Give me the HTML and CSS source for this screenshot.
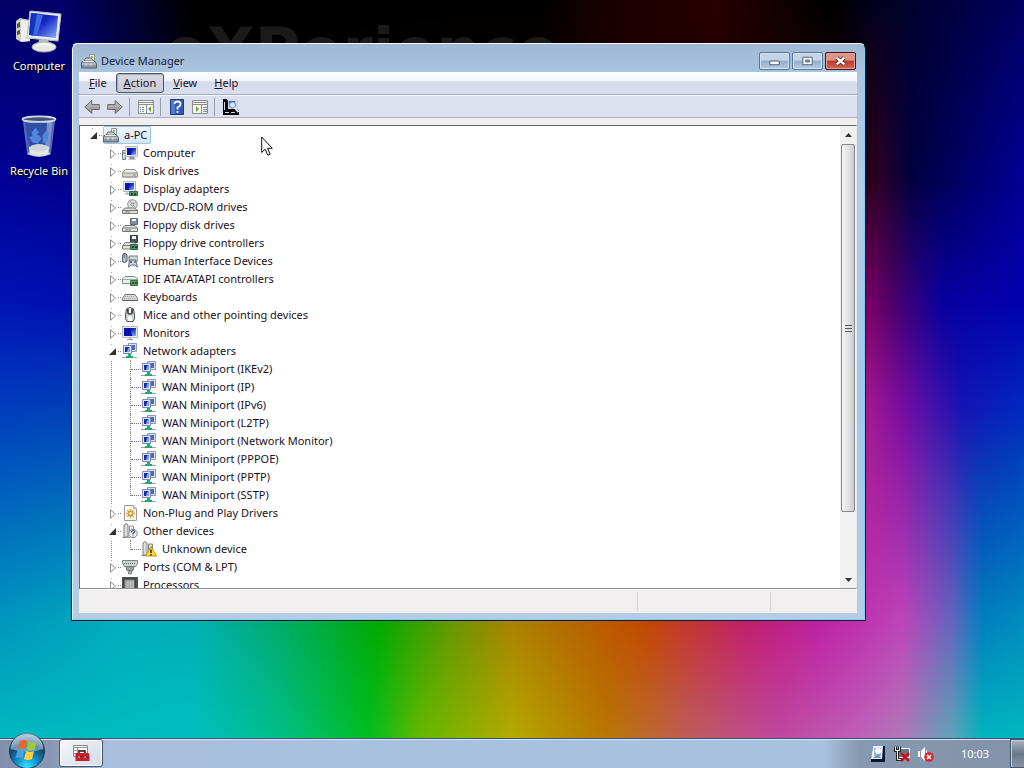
FILE: index.html
```html
<!DOCTYPE html>
<html lang="en">
<head>
<meta charset="utf-8">
<title>Device Manager</title>
<link rel="stylesheet" href="styles.css">
</head>
<body>
<svg class="defs" aria-hidden="true">
  <defs>
    <linearGradient id="screen" x1="0" y1="0" x2="1" y2="1"><stop offset="0" stop-color="#0a1488"/><stop offset=".45" stop-color="#1428c8"/><stop offset="1" stop-color="#8fb2f4"/></linearGradient>
    <linearGradient id="metal" x1="0" y1="0" x2="0" y2="1"><stop offset="0" stop-color="#f4f4f2"/><stop offset="1" stop-color="#8d9294"/></linearGradient>
    <linearGradient id="arrow" x1="0" y1="0" x2="0" y2="1"><stop offset="0" stop-color="#c8c8c8"/><stop offset="1" stop-color="#8a8a8a"/></linearGradient>
  </defs>
  <symbol id="device" viewBox="0 0 16 16"><path d="M8.500 7V1.500h5V8" fill="#eef3ec" stroke="#8d9794"/><circle cx="11" cy="4" r="1.200" fill="#8fc060"/><path d="M3 8l2-3h5l3 3z" fill="#d5dadc" stroke="#596368"/><path d="M1 8.500h13l1.500 2.500v4H.5v-4z" fill="#8c979e" stroke="#55606a"/><path d="M1 11h14M5 10v3M10 10v3" stroke="#d9dfe2"/><path d="M2 8.500h11" stroke="#e9eeee"/></symbol>
  <symbol id="computer" viewBox="0 0 16 16"><path d="M.5 5.500h3v9h-3z" fill="#d7dadb" stroke="#777d85"/><path d="M1 8h2" stroke="#667"/><path d="M3.500 1.500h12v10h-12z" fill="#e5e8ed" stroke="#b4bac6"/><path d="M5 3h9v7H5z" fill="url(#screen)"/><path d="M5 3h5l-1 7H5z" fill="#0a14a0"/><path d="M8 12h4v1.500H8zM6.500 14h7" fill="#bbb" stroke="#8a9096"/></symbol>
  <symbol id="disk" viewBox="0 0 16 16"><path d="M3.500 6.500h9l3 3v4.500h-15V9.500z" fill="#f1f1ed" stroke="#93958f"/><path d="M1 10h14v3.500H1z" fill="#d4d5d0"/><path d="M1 10h14M1 14h14" stroke="#8f918c"/><path d="M11 12h3" stroke="#7d9a65"/></symbol>
  <symbol id="display" viewBox="0 0 16 16"><path d="M1.500.5h12v10h-12z" fill="#e8ebf1" stroke="#b4bac6"/><path d="M3 2h9v7H3z" fill="url(#screen)"/><path d="M3 2h4v7H3z" fill="#0814a8"/><path d="M3 13h4M5 11v2" stroke="#95a0a8"/><path d="M7.500 10.500h8v4h-8z" fill="#4c9b68" stroke="#2f6d46"/><path d="M9 12h2v2H9zM12 12h2v2h-2z" fill="#234c36"/></symbol>
  <symbol id="dvd" viewBox="0 0 16 16"><circle cx="10.500" cy="5.500" r="4.800" fill="#e2e4e3" stroke="#858888"/><path d="M10.500 5.500L8 1.500M10.500 5.500l4-3M10.500 5.500l3 3" stroke="#9da2a0"/><circle cx="10.500" cy="5.500" r="1.500" fill="#fff" stroke="#777"/><path d="M3 9h9l3.500 2v3.500H.5V11z" fill="#dededb" stroke="#777b78"/><path d="M1 11.500h14M3 13h5" stroke="#777"/></symbol>
  <symbol id="floppy" viewBox="0 0 16 16"><path d="M8.500 1.500h7v6h-7z" fill="#7e8995" stroke="#606a75"/><path d="M10 2h4v2h-4z" fill="#f8f8f8"/><path d="M3 8.500h10l2.500 2.500v3.500H.5V11z" fill="#dededb" stroke="#777b78"/><path d="M1 11h14M3 13h6" stroke="#7d817d"/></symbol>
  <symbol id="floppyc" viewBox="0 0 16 16"><path d="M8.500.5h7v7h-7z" fill="#4a535d" stroke="#333a44"/><path d="M10 1h4v3h-4z" fill="#fff"/><path d="M3 7.500h9l3 3v3.500H.5v-3z" fill="#e2e3df" stroke="#777c77"/><path d="M1 10.500h9" stroke="#777"/><path d="M8.500 9.500h7v5h-7z" fill="#559161" stroke="#2d6540"/><path d="M10 11h2v2h-2zM13 11h2v2h-2z" fill="#203b2d"/></symbol>
  <symbol id="hid" viewBox="0 0 16 16"><path d="M1 1q2-2 4 1v6q-3 3-5 0z" fill="#b9bdc2" stroke="#4b535b"/><path d="M2.500 1v4M7 3h9v5H7z" fill="#cdd2d6" stroke="#777e85"/><path d="M6.500 14l1-7h6l2 7-3-2h-3z" fill="#cfd5dc" stroke="#606974"/><circle cx="9" cy="9" r="1" fill="#444"/><circle cx="13" cy="9" r="1" fill="#666"/></symbol>
  <symbol id="ide" viewBox="0 0 16 16"><path d="M3 5.500h9.500l3 2v5H.5V8z" fill="#eef1eb" stroke="#82908a"/><path d="M1 8.500h14" stroke="#9fac9f"/><path d="M8.500 9.500h7v5h-7z" fill="#5ba263" stroke="#32733e"/><path d="M10 11h2v2h-2zM13 11h2v2h-2z" fill="#244c2e"/></symbol>
  <symbol id="keyboard" viewBox="0 0 16 16"><path d="M3 5.500h10l2.500 4v2H.5v-2z" fill="#dadbdc" stroke="#6d7176"/><path d="M3 7.500h10M2 9.500h12" stroke="#999da2" stroke-dasharray="1 1"/><path d="M1 11.500h14" stroke="#55595d"/></symbol>
  <symbol id="mouse" viewBox="0 0 16 16"><path d="M4.500 2q3.500-3 7 0l1 6q1 4-1.500 6.500H5Q2.500 12 3.500 8z" fill="#d0d2d4" stroke="#4b4f55"/><path d="M5 2l1 5h4l1-5" fill="#62676d" stroke="#373c42"/><path d="M8 1v5" stroke="#eee" stroke-width="2"/><path d="M6 10q2-2 4 0v4H6z" fill="#fff"/></symbol>
  <symbol id="monitor" viewBox="0 0 16 16"><path d="M.5 1.500h15v11H.5z" fill="#e9ebf1" stroke="#b4bac6"/><path d="M2 3h12v8H2z" fill="url(#screen)"/><path d="M2 3h6l2 8H2z" fill="#0812a8"/><path d="M5 14.500h6M8 12v2" stroke="#929ba2"/></symbol>
  <symbol id="network" viewBox="0 0 16 16"><path d="M6.500.5h8v8h-8z" fill="#dbe2f1" stroke="#8c98b4"/><path d="M8 2h5v5H8z" fill="#4967d1"/><path d="M1.500 2.500h8v8h-8z" fill="#dfe6f5" stroke="#7c8aac"/><path d="M3 4h5v5H3z" fill="#122cae"/><path d="M6 5l2-1v5H5z" fill="#83a3ec"/><path d="M0 14.500h15" stroke="#9ca7a4"/><path d="M6 11h3v2h2v2H4v-2h2z" fill="#19ad75"/></symbol>
  <symbol id="plugplay" viewBox="0 0 16 16"><path d="M2.500.5h9l3 3v12h-12z" fill="#fbf9f0" stroke="#9b9b94"/><path d="M11.500.5v3h3" fill="#ddd" stroke="#aaa"/><path d="M8.500 4v9M4 8.500h9M5.300 5.300l6.400 6.400M11.700 5.300l-6.400 6.400" stroke="#dfa23b" stroke-width="1.500"/><circle cx="8.500" cy="8.500" r="2" fill="#fff2cb" stroke="#c7812f"/></symbol>
  <symbol id="other" viewBox="0 0 16 16"><path d="M2 14V2l2-1.500 2 1.500v12z" fill="#ddd" stroke="#7e8380"/><path d="M7.500 3h4v9h-4zM.5 14.500h8" fill="#eee" stroke="#929895"/><circle cx="11" cy="10.500" r="4.300" fill="#edf0f5" stroke="#758092"/><path d="M9.500 9.500q0-2 1.700-2 1.800 0 1.500 1.500L11 10.500v1M11 12.500v1" fill="none" stroke="#3d5278" stroke-width="1.200"/></symbol>
  <symbol id="unknown" viewBox="0 0 16 16"><path d="M2 14V2l2-1.500 2 1.500v12zM7.500 3h4v9h-4zM.5 14.500h8" fill="#ddd" stroke="#7e8380"/><path d="M10 5.500l5.500 9.500h-11z" fill="#ffe12b" stroke="#bd970e"/><path d="M10 8.500v3.500M10 13v1.500" stroke="#222" stroke-width="1.500"/></symbol>
  <symbol id="port" viewBox="0 0 16 16"><path d="M.5 1.500h15v3l-2 3h-11l-2-3z" fill="#cfd2d3" stroke="#7d8285"/><path d="M2 4.500h12" stroke="#666" stroke-dasharray="1 1"/><path d="M4 7.500h8l-1 4H5z" fill="#9da1a3" stroke="#6f7476"/><path d="M6.500 12h3v3h-3z" fill="#b8bcbc" stroke="#858a8a"/></symbol>
  <symbol id="cpu" viewBox="0 0 16 16"><path d="M0 0h16v16H0z" fill="#505354"/><path d="M2 2h11v11H2z" fill="#999d9b" stroke="#333"/><path d="M4 4h8v8H4z" fill="#b3b5b3"/></symbol>
</svg>

<main class="desktop">
  <div class="wallpaper" aria-hidden="true">
    <div class="band band-top"></div>
    <div class="band band-upper"></div>
    <div class="band band-middle"></div>
    <div class="band band-lower"></div>
    <div class="band band-base"></div>
    <div class="band band-floor"></div>
    <span class="wordmark">eXPerience</span>
  </div>

  <nav class="shortcuts" aria-label="Desktop">
    <a class="shortcut" href="#computer-shortcut">
      <svg viewBox="0 0 46 46" aria-hidden="true"><path d="M0 12l4-3 10 2v21l-9 1-5-3z" fill="#c9ccc4"/><path d="M5 11l9 1v20l-9 1z" fill="#eceee7"/><path d="M1 15l3-2v5l-3 1zM1 22l3-1v4l-3 1z" fill="#52544c"/><path d="M14 2l31 3-3 27-31-3z" fill="#e9ece9" stroke="#b5bdc4"/><path d="M15 4l27 3-2 22-27-3z" fill="url(#screen)"/><path d="M15 4l11 1-5 22-8-1z" fill="#1232c0"/><path d="M21 5l6 1-6 21-4-1z" fill="#3e68df"/><path d="M23 31h9l2 6H21z" fill="#b8beba"/><ellipse cx="28" cy="38" rx="12" ry="5" fill="#e6e9e5" stroke="#aeb5ac"/><path d="M20 37q8-4 16 0" fill="none" stroke="#fff"/></svg>
      <span>Computer</span>
    </a>
    <a class="shortcut" href="#recycle-bin">
      <svg viewBox="0 0 46 46" aria-hidden="true"><path d="M5 3h36l-5 39q-13 6-26 0z" fill="#7d9bd4" opacity=".65"/><path d="M8 6h30l-4 30H12z" fill="#24469f" opacity=".7"/><path d="M32 6h6l-4 35h-5z" fill="#b8c6e4" opacity=".55"/><path d="M12 34q11-6 22 0l-1 8q-10 4-20 0z" fill="#e6e8e3"/><ellipse cx="23" cy="35" rx="10" ry="4" fill="#cfd6d7"/><path d="M15 18l4-5 4 5-2 2 5 4-4 6-6-1-4-6 4-1zM27 21l5-6 2 4-2 9-5 2z" fill="#4f86dc"/><ellipse cx="23" cy="3.500" rx="18" ry="3" fill="#41547f" stroke="#d3dae2" stroke-width="2"/><path d="M11 41q12 5 24 0" fill="none" stroke="#d6dbe1" stroke-width="2"/></svg>
      <span>Recycle Bin</span>
    </a>
  </nav>

  <section class="window" aria-label="Device Manager">
    <header class="titlebar">
      <svg class="icon" aria-hidden="true"><use href="#device"/></svg>
      <h1>Device Manager</h1>
      <div class="controls">
        <button aria-label="Minimize"><svg viewBox="0 0 31 17"><path d="M10.500 8.500h10v4h-10z" fill="#fff" stroke="#4b5a75"/></svg></button>
        <button aria-label="Maximize"><svg viewBox="0 0 31 17"><path d="M10.500 4.500h10v8h-10z" fill="#fff" stroke="#4b5a75"/><path d="M13.500 7.500h4v2h-4z" fill="#8ea6c6" stroke="#4b5a75"/></svg></button>
        <button class="close" aria-label="Close"><svg viewBox="0 0 31 17"><path d="M11.500 5l8 7M19.500 5l-8 7" stroke="#5c2a31" stroke-width="4.500"/><path d="M11.500 5l8 7M19.500 5l-8 7" stroke="#fff" stroke-width="2.500"/></svg></button>
      </div>
    </header>

    <div class="client">
      <nav class="menubar" aria-label="Menu">
        <button><u>F</u>ile</button>
        <button class="active"><u>A</u>ction</button>
        <button><u>V</u>iew</button>
        <button><u>H</u>elp</button>
      </nav>
      <div class="toolbar">
        <button aria-label="Back"><svg viewBox="0 0 16 16"><path d="M.8 8l7-6.500v4h7.500v5H7.800v4z" fill="url(#arrow)" stroke="#696969"/></svg></button>
        <button class="forward" aria-label="Forward"><svg viewBox="0 0 16 16"><path d="M15.200 8l-7-6.500v4H.7v5h7.500v4z" fill="url(#arrow)" stroke="#696969"/></svg></button>
        <i class="separator"></i>
        <button aria-label="Show console tree"><svg viewBox="0 0 16 16"><path d="M.5 1.500h15v13H.5z" fill="#f5f5f0" stroke="#8a8d94"/><path d="M1 3.500h14M1 5.500h14M8.500 6v8" stroke="#8a8d94"/><path d="M2 8.500h4M2 10.500h4M2 12.500h4" stroke="#7f91a6" stroke-dasharray="1 1 2"/><path d="M13 7v6l-3-3z" fill="#70a72e"/><path d="M12 2.500h3" stroke="#fff" stroke-dasharray="1 1"/></svg></button>
        <i class="separator"></i>
        <button aria-label="Help"><svg viewBox="0 0 16 16"><path d="M1.500.5h13v15h-13z" fill="#3158b4" stroke="#213b83"/><path d="M2 1h4v14H2z" fill="#4d7acb"/><path d="M5.500 5q0-2.500 3-2.500 3.500 0 3 3 0 1.500-3 3v2M8.500 12v2" fill="none" stroke="#fff" stroke-width="1.800"/></svg></button>
        <button class="forward" aria-label="Show action pane"><svg viewBox="0 0 16 16"><path d="M.5 1.500h15v13H.5z" fill="#f5f5f0" stroke="#8a8d94"/><path d="M1 3.500h14M1 5.500h14M9.500 6v8" stroke="#8a8d94"/><path d="M11 8.500h4M11 10.500h4M11 12.500h4" stroke="#7f91a6"/><path d="M4 7v6l3-3z" fill="#70a72e"/></svg></button>
        <i class="separator"></i>
        <button aria-label="Scan for hardware changes"><svg viewBox="0 0 16 16"><path d="M0 0h4v1h11v10h1v5H0z" fill="#080a10"/><path d="M5 1h10v9H5z" fill="#c7d5e8"/><path d="M6 2h6v6H6z" fill="#3368c3"/><circle cx="9.500" cy="6" r="3" fill="#dbe8f1" stroke="#6f94c4"/><path d="M11.500 8.500l4 4.500" stroke="#e0e4e8" stroke-width="2"/><path d="M1.500 3v8M2 13.500h4M8 13.500h4" stroke="#d5d8d8"/></svg></button>
      </div>

      <div class="content">
        <ul class="tree" aria-label="Devices">
          <li class="root"><div class="row"><button class="toggle open" aria-label="Collapse"></button><span class="selected"><svg class="icon" aria-hidden="true"><use href="#device"/></svg><span class="label">a-PC</span></span></div>
            <ul class="branch">
              <li><div class="row"><button class="toggle" aria-label="Expand"></button><svg class="icon" aria-hidden="true"><use href="#computer"/></svg><span class="label">Computer</span></div></li>
              <li><div class="row"><button class="toggle" aria-label="Expand"></button><svg class="icon" aria-hidden="true"><use href="#disk"/></svg><span class="label">Disk drives</span></div></li>
              <li><div class="row"><button class="toggle" aria-label="Expand"></button><svg class="icon" aria-hidden="true"><use href="#display"/></svg><span class="label">Display adapters</span></div></li>
              <li><div class="row"><button class="toggle" aria-label="Expand"></button><svg class="icon" aria-hidden="true"><use href="#dvd"/></svg><span class="label">DVD/CD-ROM drives</span></div></li>
              <li><div class="row"><button class="toggle" aria-label="Expand"></button><svg class="icon" aria-hidden="true"><use href="#floppy"/></svg><span class="label">Floppy disk drives</span></div></li>
              <li><div class="row"><button class="toggle" aria-label="Expand"></button><svg class="icon" aria-hidden="true"><use href="#floppyc"/></svg><span class="label">Floppy drive controllers</span></div></li>
              <li><div class="row"><button class="toggle" aria-label="Expand"></button><svg class="icon" aria-hidden="true"><use href="#hid"/></svg><span class="label">Human Interface Devices</span></div></li>
              <li><div class="row"><button class="toggle" aria-label="Expand"></button><svg class="icon" aria-hidden="true"><use href="#ide"/></svg><span class="label">IDE ATA/ATAPI controllers</span></div></li>
              <li><div class="row"><button class="toggle" aria-label="Expand"></button><svg class="icon" aria-hidden="true"><use href="#keyboard"/></svg><span class="label">Keyboards</span></div></li>
              <li><div class="row"><button class="toggle" aria-label="Expand"></button><svg class="icon" aria-hidden="true"><use href="#mouse"/></svg><span class="label">Mice and other pointing devices</span></div></li>
              <li><div class="row"><button class="toggle" aria-label="Expand"></button><svg class="icon" aria-hidden="true"><use href="#monitor"/></svg><span class="label">Monitors</span></div></li>
              <li><div class="row"><button class="toggle open" aria-label="Collapse"></button><svg class="icon" aria-hidden="true"><use href="#network"/></svg><span class="label">Network adapters</span></div>
                <ul class="branch leaves">
                  <li><div class="row"><i class="stub"></i><svg class="icon" aria-hidden="true"><use href="#network"/></svg><span class="label">WAN Miniport (IKEv2)</span></div></li>
                  <li><div class="row"><i class="stub"></i><svg class="icon" aria-hidden="true"><use href="#network"/></svg><span class="label">WAN Miniport (IP)</span></div></li>
                  <li><div class="row"><i class="stub"></i><svg class="icon" aria-hidden="true"><use href="#network"/></svg><span class="label">WAN Miniport (IPv6)</span></div></li>
                  <li><div class="row"><i class="stub"></i><svg class="icon" aria-hidden="true"><use href="#network"/></svg><span class="label">WAN Miniport (L2TP)</span></div></li>
                  <li><div class="row"><i class="stub"></i><svg class="icon" aria-hidden="true"><use href="#network"/></svg><span class="label">WAN Miniport (Network Monitor)</span></div></li>
                  <li><div class="row"><i class="stub"></i><svg class="icon" aria-hidden="true"><use href="#network"/></svg><span class="label">WAN Miniport (PPPOE)</span></div></li>
                  <li><div class="row"><i class="stub"></i><svg class="icon" aria-hidden="true"><use href="#network"/></svg><span class="label">WAN Miniport (PPTP)</span></div></li>
                  <li><div class="row"><i class="stub last"></i><svg class="icon" aria-hidden="true"><use href="#network"/></svg><span class="label">WAN Miniport (SSTP)</span></div></li>
                </ul>
              </li>
              <li><div class="row"><button class="toggle" aria-label="Expand"></button><svg class="icon" aria-hidden="true"><use href="#plugplay"/></svg><span class="label">Non-Plug and Play Drivers</span></div></li>
              <li><div class="row"><button class="toggle open" aria-label="Collapse"></button><svg class="icon" aria-hidden="true"><use href="#other"/></svg><span class="label">Other devices</span></div>
                <ul class="branch leaves">
                  <li><div class="row"><i class="stub last"></i><svg class="icon" aria-hidden="true"><use href="#unknown"/></svg><span class="label">Unknown device</span></div></li>
                </ul>
              </li>
              <li><div class="row"><button class="toggle" aria-label="Expand"></button><svg class="icon" aria-hidden="true"><use href="#port"/></svg><span class="label">Ports (COM &amp; LPT)</span></div></li>
              <li><div class="row"><button class="toggle" aria-label="Expand"></button><svg class="icon" aria-hidden="true"><use href="#cpu"/></svg><span class="label">Processors</span></div></li>
            </ul>
          </li>
        </ul>
        <div class="scrollbar">
          <button aria-label="Scroll up"><svg viewBox="0 0 7 4"><path d="M0 4l3.500-4L7 4z" fill="#333"/></svg></button>
          <div class="track"><div class="thumb"><i></i><i></i><i></i></div></div>
          <button aria-label="Scroll down"><svg viewBox="0 0 7 4"><path d="M0 0l3.500 4L7 0z" fill="#333"/></svg></button>
        </div>
      </div>
      <footer class="statusbar"><span></span><span></span><span></span></footer>
    </div>
  </section>

  <svg class="pointer" viewBox="0 0 12 20" aria-hidden="true"><path d="M.7 1v15.500l3.500-3.300 2.600 6 2.400-1-2.600-5.900h4.700z" fill="#fff" stroke="#111"/></svg>
</main>

<footer class="taskbar">
  <button class="start" aria-label="Start">
    <svg viewBox="0 0 38 38" aria-hidden="true">
      <defs><radialGradient id="orb" cx=".5" cy=".95" r=".9"><stop offset="0" stop-color="#35e6ff"/><stop offset=".35" stop-color="#1391cf"/><stop offset=".7" stop-color="#12466f"/><stop offset="1" stop-color="#8fb3cd"/></radialGradient></defs>
      <circle cx="19" cy="19" r="17.500" fill="url(#orb)" stroke="#1c3a56"/><path d="M3 17a16 16 0 0 1 32 0q-16 6-32 0z" fill="#dceaf4" opacity=".45"/>
      <path d="M12 9q4-2 7 0l-2 8q-4-2-7 0z" fill="#ef6425"/><path d="M20.500 9.500q4 2 8 0l-2 8q-4 2-8 0z" fill="#9bcb45"/><path d="M9.500 18.500q4-2 7 0l-2 8q-4-2-7 0z" fill="#4aa3e4"/><path d="M18 19q4 2 8 0l-2 8q-4 2-8 0z" fill="#ffd23d"/>
    </svg>
  </button>
  <button class="task" aria-label="Device Manager">
    <svg viewBox="0 0 18 18" aria-hidden="true"><path d="M1.500 1.500h14v11h-14z" fill="#fff" stroke="#888"/><path d="M1 3.500h15M1 6.500h12M1 9.500h12M5.500 4v8" stroke="#999"/><path d="M7 9V7h6v2" fill="none" stroke="#3a1015" stroke-width="1.500"/><path d="M3.500 9h13l1 2v6h-14z" fill="#c2202d"/><path d="M4 12.500h13" stroke="#8e1720"/><path d="M7 12v2M13 12v2" stroke="#f4c4c4"/></svg>
  </button>
  <div class="tray">
    <svg viewBox="0 0 16 16" aria-hidden="true"><path d="M3 0h12v16H1v-2z" fill="#0a1530"/><path d="M3 0h10l-1 13H1z" fill="#e7f0f7"/><path d="M4 2h7v8H4z" fill="#9bb8d3"/><circle cx="8" cy="5" r="3" fill="#f7fbff"/><path d="M3 12l5-4 3 4" fill="#7694b4"/></svg>
    <svg viewBox="0 0 16 16" aria-hidden="true"><path d="M4.500 2.500h11v9h-11z" fill="#687583" stroke="#fff"/><path d="M1.500.5v4h4v-4M3.500 5v8.500h6" fill="none" stroke="#222" stroke-width="3"/><path d="M1.500.5v4h4v-4M3.500 5v8.500h6" fill="none" stroke="#fff"/><path d="M7 7l8 8M15 7l-8 8" stroke="#c8131c" stroke-width="2.500"/></svg>
    <svg viewBox="0 0 16 16" aria-hidden="true"><path d="M0 5h2v6H0zM3 5l4-4v14l-4-4z" fill="#fff"/><path d="M8.500 4v8" stroke="#eee"/><circle cx="11" cy="11" r="4.800" fill="#d12931"/><path d="M9 9l4 4M13 9l-4 4" stroke="#fff" stroke-width="1.700"/></svg>
    <time>10:03</time>
  </div>
  <button class="peek" aria-label="Show desktop"></button>
</footer>
</body>
</html>
```
FILE: styles.css
```css
* { box-sizing: border-box; }

body {
  margin: 0;
  height: 100vh;
  display: flex;
  flex-direction: column;
  overflow: hidden;
  font: 11px/18px "Noto Sans", "Open Sans", sans-serif;
  color: #1c1020;
}

button {
  margin: 0;
  padding: 0;
  border: 0;
  background: none;
  font: inherit;
  color: inherit;
}

ul { list-style: none; margin: 0; padding: 0; }
svg { display: block; }
.defs { position: absolute; width: 0; height: 0; }
.icon { width: 16px; height: 16px; flex: none; }

/* Desktop background: horizontal colour bands blended downwards */
.desktop { position: relative; flex: 1; min-height: 0; background: #000; }
.wallpaper, .band { position: absolute; inset: 0; overflow: hidden; }

.band-top { background: linear-gradient(90deg, #000064, #000068 6%, #000038 12%, #000 19%, #000 52%, #1c0000 60%, #280000 70%, #000 81%, #000020 86%, #000060); }
.band-upper {
  background: linear-gradient(90deg, #000096, #00008c 8%, #000 20%, #200000 70%, #280010 84%, #280028 86%, #000040 89%, #000096);
  mask-image: linear-gradient(transparent, #000 24%);
}
.band-middle {
  background: linear-gradient(90deg, #0014b4, #0010b0 8%, #000 30%, #600030 80%, #780068 85%, #500068 87%, #0800a0 92%, #0000b0);
  mask-image: linear-gradient(transparent 24%, #000 41%);
}
.band-lower {
  background: linear-gradient(90deg, #003cbe, #0040b8 8%, #004000 35%, #800020 70%, #a01890 85%, #780ca0 88%, #1414b4 94%, #0028be);
  mask-image: linear-gradient(transparent 41%, #000 55%);
}
.band-base {
  background: linear-gradient(90deg, #0096be, #00aebe 12%, #00b0b4 19%, #00ac78 26%, #00aa00 37%, #649800 44%, #aa8200 50%, #c34800 63%, #c31e6c 73%, #be20a4 80%, #be44b8 88%, #6464be 93%, #0080be 96%, #008cbe);
  mask-image: linear-gradient(transparent 55%, #000 84%);
}
.band-floor {
  background: linear-gradient(90deg, #00b8be, #00bebe 19%, #00be8c 27%, #00be20 36%, #64b800 41%, #b4aa00 50%, #b87800 59%, #be5a64 68%, #be48a0 76%, #be60b8 84%, #b078b8 88%, #60a4b8 93%, #00b4be 96%, #00b8be);
  mask-image: linear-gradient(transparent 84%, #000);
}
.wordmark {
  position: absolute;
  left: 165px;
  top: 20px;
  font: bold 62px/62px "DejaVu Sans", sans-serif;
  color: #1c1919;
}

.shortcuts { position: absolute; top: 9px; left: 0; width: 78px; display: grid; gap: 39px; }
.shortcut {
  display: flex;
  flex-direction: column;
  align-items: center;
  gap: 2px;
  color: #fff;
  text-decoration: none;
  text-shadow: 0 1px 2px #000, 1px 1px 1px #000;
}
.shortcut svg { width: 46px; height: 46px; }
.shortcut + .shortcut svg { width: 42px; }

/* Window */
.window {
  position: absolute;
  inset: 43px 158px 117px 71px;
  display: flex;
  flex-direction: column;
  padding: 0 8px 7px 7px;
  border: 1px solid #101c30;
  border-top-color: #f4f8ff;
  border-radius: 6px 6px 0 0;
  background: linear-gradient(#a0b8d4, #a9c4e0 28px, #b4cde6 25%, #a2c9e8 60%, #b5cce4);
  box-shadow: inset 1px 0 #eef6ff, inset -1px -1px #7fd2f4;
}
.titlebar { display: flex; align-items: center; height: 28px; flex: none; padding: 5px 1px 0 2px; }
.titlebar h1 { margin: 0 0 0 4px; flex: 1; font-size: 11px; font-weight: normal; color: #152038; }
.controls { display: flex; gap: 2px; }
.controls button {
  width: 31px;
  height: 18px;
  border: 1px solid #5c7695;
  border-radius: 2px;
  box-shadow: inset 0 0 0 1px #d3e1f0;
  background: linear-gradient(#c5d5e8 45%, #93acca 50%, #b7cbe1);
}
.controls .close {
  border-color: #4d1020;
  box-shadow: inset 0 0 0 1px #e2a097;
  background: linear-gradient(#dd9488 45%, #bc3c2c 50%, #cf6a52);
}
.controls svg { width: 100%; height: 100%; }

.client { flex: 1; min-height: 0; display: flex; flex-direction: column; background: #f0eeee; }
.menubar {
  display: flex;
  flex: none;
  gap: 1px;
  height: 23px;
  padding: 1px 2px;
  border-bottom: 1px solid #a4acc2;
  background: linear-gradient(#fff, #f0f3fb 40%, #d6dcec 45%, #d8deee);
}
.menubar button { padding: 0 7px; border: 1px solid transparent; line-height: 18px; }
.menubar .active {
  border-color: #4d5468;
  border-radius: 3px;
  background: linear-gradient(#d8dbe4, #c8ccd8);
  box-shadow: inset 1px 1px 1px #a4a9b8;
}
.toolbar {
  display: flex;
  align-items: center;
  flex: none;
  height: 23px;
  padding-left: 5px;
  border-top: 1px solid #f5f7fc;
  border-bottom: 1px solid #aab0c2;
  background: linear-gradient(#dce1ef, #dce0f0);
}
.toolbar svg { width: 16px; height: 16px; }
.toolbar .forward { margin-left: 7px; }
.separator { width: 1px; height: 18px; margin: 0 8px 0 6px; background: #969daf; }

.content {
  flex: 1;
  min-height: 0;
  display: flex;
  margin-top: 7px;
  border: 1px solid #8a8f98;
  border-top-color: #606368;
  border-left-color: #606b80;
  border-right-color: #e4e8ee;
  background: #fff;
}
.tree { flex: 1; overflow: hidden; padding-left: 4px; }
.branch { padding-left: 19px; }
.row { display: flex; align-items: center; height: 18px; white-space: nowrap; }
.label { margin-left: 5px; }
.selected {
  display: flex;
  align-items: center;
  height: 18px;
  padding-right: 4px;
  border-radius: 2px;
  background: linear-gradient(#f0f6fd, #d3e5f8);
  box-shadow: inset 0 0 0 1px #a4c4e4;
}

/* Expander slot: a triangle with dotted guides beside it */
.toggle, .stub { position: relative; flex: none; width: 19px; height: 18px; }
.toggle {
  background:
    linear-gradient(#aaa, #aaa) 8px 2px / 1px 1px no-repeat,
    linear-gradient(#888, #888) 15px 9px / 1px 1px no-repeat,
    linear-gradient(#888, #888) 17px 9px / 1px 1px no-repeat;
}
.toggle::before, .toggle::after {
  content: "";
  position: absolute;
  left: 7px;
  top: 5px;
  width: 6px;
  height: 10px;
  background: #8c8c8c;
  clip-path: polygon(0 0, 100% 50%, 0 100%);
}
.toggle::after { left: 8px; top: 7px; width: 4px; height: 6px; background: #fff; }
.toggle.open::before { display: none; }
.toggle.open::after {
  left: 6px;
  top: 6px;
  width: 7px;
  height: 7px;
  background: #303030;
  clip-path: polygon(100% 0, 100% 100%, 0 100%);
}
.stub::before {
  content: "";
  position: absolute;
  left: 8px;
  top: 0;
  bottom: 0;
  border-left: 1px dotted #8a8a8a;
}
.stub::after {
  content: "";
  position: absolute;
  left: 9px;
  right: 0;
  top: 9px;
  border-top: 1px dotted #777;
}
.stub.last::before { bottom: 8px; }
.leaves { background: repeating-linear-gradient(#fff 0 1px, #8a8a8a 1px 2px) 8px 0 / 1px 100% no-repeat; }

.scrollbar { display: flex; flex-direction: column; flex: none; width: 16px; background: #f1f1f1; }
.scrollbar > button { height: 17px; display: grid; place-items: center; }
.scrollbar button svg { width: 7px; height: 4px; }
.track { flex: 1; }
.thumb {
  height: 86%;
  margin: 1px 1px 0;
  display: flex;
  flex-direction: column;
  justify-content: center;
  align-items: center;
  gap: 2px;
  border: 1px solid #888;
  border-radius: 2px;
  background: linear-gradient(90deg, #f4f4f4, #e4e4e6 50%, #c8cacd);
}
.thumb i { width: 7px; height: 1px; background: #555; }

.statusbar { display: flex; flex: none; height: 24px; border-top: 1px solid #fff; background: #f0eeee; }
.statusbar span { margin: 2px 0; border-right: 1px solid #d5d5d8; flex: 559; }
.statusbar span:nth-child(2) { flex: 133; }
.statusbar span:nth-child(3) { flex: 86; border: 0; }

.pointer { position: absolute; left: 261px; top: 136px; width: 12px; height: 20px; }

/* Taskbar */
.taskbar {
  position: relative;
  display: flex;
  flex: none;
  height: 30px;
  border-top: 1px solid #35507a;
  box-shadow: inset 0 1px #d9e5f1;
  background: linear-gradient(90deg, #8090ac, #8898b2 50px, #a8c0de 110px, #a8c2de calc(100% - 200px), #8799b0 calc(100% - 165px), #8292a8);
}
.start { width: 38px; height: 38px; margin: -7px 13px 0 8px; flex: none; }
.task {
  width: 44px;
  height: 28px;
  display: grid;
  place-items: center;
  border: 1px solid #46566c;
  border-radius: 3px;
  background: linear-gradient(135deg, #f3f6f9, #d4dde8);
  box-shadow: inset 0 0 0 1px #fff;
}
.task svg { width: 18px; height: 18px; }
.tray { display: flex; align-items: center; gap: 8px; margin-left: auto; color: #fff; }
.tray svg { width: 16px; height: 16px; }
.tray time { margin: 0 21px 0 19px; }
.peek {
  width: 14px;
  border: 1px solid #46566a;
  border-right: 0;
  background: linear-gradient(#aab6c4, #69788b 50%, #8794a5);
  box-shadow: inset 1px 1px #c5d0dc;
}
```
